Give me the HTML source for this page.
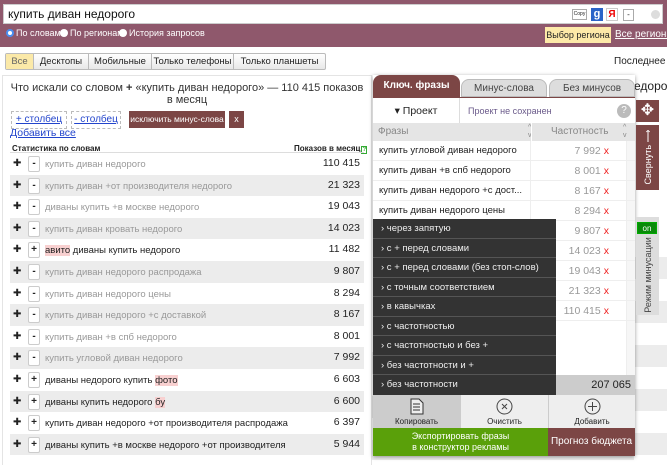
<!DOCTYPE html>
<html><head><meta charset="utf-8"><style>
*{box-sizing:border-box;margin:0;padding:0}
body{width:667px;height:463px;overflow:hidden;background:#fff;font-family:"Liberation Sans",Arial,sans-serif;font-size:11px;color:#222;position:relative;white-space:nowrap}
.a{position:absolute}
.hdr{left:0;top:0;width:667px;height:47px;background:#8f586c}
.inp{left:3px;top:4px;width:660px;height:20px;background:#fff;border:1px solid #ccc;font-size:12px;padding:2px 4px;color:#111}
.rad{top:28px;color:#fff;font-size:9px}
.rad i{display:inline-block;width:8px;height:8px;border-radius:50%;background:#fff;margin-right:2px;vertical-align:-1px}
.tabs{left:5px;top:53px;height:17px;display:flex;border:1px solid #bbb;border-radius:2px;background:linear-gradient(#fff,#e8e8e8)}
.tabs div{line-height:15px;border-right:1px solid #bbb;font-size:9.5px;text-align:center}
.row{left:10px;width:354px;height:21.6px}
.row.g{background:#ececec}
.pl{position:absolute;left:3px;top:5px;font-size:10px;line-height:12px}
.bx{position:absolute;left:18px;top:3px;width:12px;height:16px;border:1px solid #ccc;border-radius:2px;background:#fff;text-align:center;line-height:13px;font-weight:bold;font-size:10px}
.tx{position:absolute;left:35px;top:6px;font-size:9.5px;color:#999}
.tx.d{color:#222}
.nm{position:absolute;right:4px;top:4px;font-size:10.5px;color:#222}
.pop{left:373px;top:75px;width:262px;height:381px;box-shadow:0 1px 4px rgba(0,0,0,.4);background:#fff}
.ptab{top:0;height:22px;border-radius:8px 8px 0 0;text-align:center;line-height:22px;font-size:10px}
.fr{left:0;width:262px;height:20px;border-bottom:1px solid #eee}
.fr span{position:absolute;left:6px;top:4px;font-size:9.5px}
.fr b{position:absolute;right:26px;top:4px;font-weight:normal;color:#999;font-size:10.5px}
.fr b em{color:#e22;font-style:normal;margin-left:3px}
.menu{left:0;top:144px;width:183px;height:176px;background:#333}
.menu div{height:19.55px;border-bottom:1px solid #555;color:#eee;font-size:9.5px;line-height:19px;padding-left:8px}
</style></head><body>
<div class="a hdr"></div>
<div class="a inp">купить диван недорого</div>
<div class="a" style="left:572px;top:9px;width:15px;height:11px;border:1px solid #aaa;font-size:5px;line-height:9px;text-align:center;background:#fff">Copy</div>
<div class="a" style="left:591px;top:8px;width:12px;height:13px;background:#2a64c8;color:#fff;font-size:11px;text-align:center;font-weight:bold;line-height:13px">g</div>
<div class="a" style="left:606px;top:8px;width:12px;height:13px;border:1px solid #ccc;color:#e00;font-size:10px;text-align:center;line-height:11px;font-weight:bold;background:#fff">Я</div>
<div class="a" style="left:623px;top:9px;width:11px;height:12px;border:1px solid #aaa;font-size:8px;text-align:center;line-height:9px;background:#fff">-</div>
<div class="a" style="left:651px;top:10px;width:9px;height:9px;border-radius:50%;background:#ddd"></div>
<div class="a rad" style="left:6px"><i style="background:#fff;border:2px solid #4a8ff0"></i>По словам</div>
<div class="a rad" style="left:60px"><i></i>По регионам</div>
<div class="a rad" style="left:119px"><i></i>История запросов</div>
<div class="a" style="left:545px;top:27px;width:66px;height:16px;background:#fde9a8;font-size:9px;line-height:16px;text-align:center">Выбор региона</div>
<div class="a" style="left:615px;top:29px;color:#fff;font-size:10px;text-decoration:underline">Все регионы</div>
<div class="a tabs"><div style="width:28px;background:#fbe9a8;color:#666">Все</div><div style="width:55px">Десктопы</div><div style="width:63px">Мобильные</div><div style="width:82px">Только телефоны</div><div style="width:91px;border:0">Только планшеты</div></div>
<div class="a" style="left:614px;top:56px;font-size:10px">Последнее о</div>
<div class="a" style="left:2px;top:75px;width:370px;height:390px;border:1px solid #e4e4e4;border-bottom:0"></div>
<div class="a" style="left:10px;top:82px;width:354px;text-align:center;font-size:11px;line-height:12px;color:#333">Что искали со словом <b>+</b> «купить диван недорого» — 110 415 показов<br>в месяц</div>
<div class="a" style="left:11px;top:111px;width:56px;height:18px;border:1px dashed #bbb;text-align:center;line-height:16px;color:#24c;text-decoration:underline;font-size:10px">+ столбец</div>
<div class="a" style="left:71px;top:111px;width:50px;height:18px;border:1px dashed #bbb;text-align:center;line-height:16px;color:#24c;text-decoration:underline;font-size:10px">- столбец</div>
<div class="a" style="left:129px;top:111px;width:96px;height:17px;background:#7c4645;color:#fff;font-size:8.5px;text-align:center;line-height:17px">исключить минус-слова</div>
<div class="a" style="left:229px;top:111px;width:15px;height:17px;background:#7c4645;color:#fff;font-size:9px;text-align:center;line-height:17px">x</div>
<div class="a" style="left:10px;top:127px;color:#24c;text-decoration:underline;font-size:10.5px">Добавить все</div>
<div class="a" style="left:12px;top:144px;font-size:8px;font-weight:bold">Статистика по словам</div>
<div class="a" style="left:294px;top:144px;font-size:8px;font-weight:bold">Показов в месяц<span style="color:#3a3;border:1px solid #3a3;font-size:6px;margin-left:1px">?</span></div>
<div class="a" style="left:10px;top:152px;width:354px;height:1px;background:#ddd"></div>

<div class="a row" style="top:153px"><span class="pl">✚</span><span class="bx">-</span><span class="tx">купить диван недорого</span><span class="nm">110 415</span></div>
<div class="a row g" style="top:174.6px"><span class="pl">✚</span><span class="bx">-</span><span class="tx">купить диван +от производителя недорого</span><span class="nm">21 323</span></div>
<div class="a row" style="top:196.2px"><span class="pl">✚</span><span class="bx">-</span><span class="tx">диваны купить +в москве недорого</span><span class="nm">19 043</span></div>
<div class="a row g" style="top:217.8px"><span class="pl">✚</span><span class="bx">-</span><span class="tx">купить диван кровать недорого</span><span class="nm">14 023</span></div>
<div class="a row" style="top:239.4px"><span class="pl">✚</span><span class="bx">+</span><span class="tx d"><span style="background:#f8d0d0">авито</span> диваны купить недорого</span><span class="nm">11 482</span></div>
<div class="a row g" style="top:261px"><span class="pl">✚</span><span class="bx">-</span><span class="tx">купить диван недорого распродажа</span><span class="nm">9 807</span></div>
<div class="a row" style="top:282.6px"><span class="pl">✚</span><span class="bx">-</span><span class="tx">купить диван недорого цены</span><span class="nm">8 294</span></div>
<div class="a row g" style="top:304.2px"><span class="pl">✚</span><span class="bx">-</span><span class="tx">купить диван недорого +с доставкой</span><span class="nm">8 167</span></div>
<div class="a row" style="top:325.8px"><span class="pl">✚</span><span class="bx">-</span><span class="tx">купить диван +в спб недорого</span><span class="nm">8 001</span></div>
<div class="a row g" style="top:347.4px"><span class="pl">✚</span><span class="bx">-</span><span class="tx">купить угловой диван недорого</span><span class="nm">7 992</span></div>
<div class="a row" style="top:369px"><span class="pl">✚</span><span class="bx">+</span><span class="tx d">диваны недорого купить <span style="background:#f8d0d0">фото</span></span><span class="nm">6 603</span></div>
<div class="a row g" style="top:390.6px"><span class="pl">✚</span><span class="bx">+</span><span class="tx d">диваны купить недорого <span style="background:#f8d0d0">бу</span></span><span class="nm">6 600</span></div>
<div class="a row" style="top:412.2px"><span class="pl">✚</span><span class="bx">+</span><span class="tx d">купить диван недорого +от производителя распродажа</span><span class="nm">6 397</span></div>
<div class="a row g" style="top:433.8px"><span class="pl">✚</span><span class="bx">+</span><span class="tx d">диваны купить +в москве недорого +от производителя</span><span class="nm">5 944</span></div>
<div class="a" style="left:372px;top:330px;width:262px;height:130px;background:repeating-linear-gradient(#fff 0,#fff 22px,#ececec 22px,#ececec 44px)"></div>
<div class="a" style="left:634px;top:235px;width:33px;height:230px;background:repeating-linear-gradient(#fff 0,#fff 22px,#ececec 22px,#ececec 44px)"></div>
<div class="a" style="left:634px;top:79px;font-size:12px">едорог</div>

<div class="a pop">
<div class="a ptab" style="left:0;width:87px;background:#7c4645;color:#fff;font-weight:bold;border-radius:8px 8px 0 0">Ключ. фразы</div>
<div class="a ptab" style="left:88px;top:4px;height:18px;line-height:18px;width:86px;background:#ddd;border:1px solid #bbb;color:#444">Минус-слова</div>
<div class="a ptab" style="left:176px;top:4px;height:18px;line-height:18px;width:86px;background:#ddd;border:1px solid #bbb;color:#444">Без минусов</div>
<div class="a" style="left:0;top:22px;width:262px;height:1px;background:#7c4645"></div>
<div class="a" style="left:0;top:23px;width:87px;height:26px;border-right:1px solid #ddd;text-align:center;line-height:26px;font-size:10.5px">▾ Проект</div>
<div class="a" style="left:95px;top:31px;font-size:9px;color:#6a5a8a">Проект не сохранен</div>
<div class="a" style="left:244px;top:29px;width:14px;height:14px;border-radius:50%;background:#bbb;color:#fff;text-align:center;line-height:14px;font-size:10px">?</div>
<div class="a" style="left:0;top:48px;width:262px;height:18px;background:#e5e5e5;color:#888;font-size:10px;line-height:18px"><span style="position:absolute;left:5px">Фразы</span><span style="position:absolute;left:178px">Частотность</span><span style="position:absolute;left:155px;font-size:7px;line-height:8px;top:1px">^<br>v</span><span style="position:absolute;left:250px;font-size:7px;line-height:8px;top:1px">^<br>v</span><span style="position:absolute;left:158px;top:0;width:1px;height:18px;background:#fff"></span></div>
<div class="a" style="left:253px;top:66px;width:9px;height:310px;background:#f6f6f6;border-left:1px solid #eee"></div>
<div class="a" style="left:157px;top:66px;width:1px;height:234px;background:#eee"></div>
<div class="a fr" style="top:66px"><span>купить угловой диван недорого</span><b>7 992<em>x</em></b></div>
<div class="a fr" style="top:86px"><span>купить диван +в спб недорого</span><b>8 001<em>x</em></b></div>
<div class="a fr" style="top:106px"><span>купить диван недорого +с дост...</span><b>8 167<em>x</em></b></div>
<div class="a fr" style="top:126px"><span>купить диван недорого цены</span><b>8 294<em>x</em></b></div>
<div class="a fr" style="top:146px"><b>9 807<em>x</em></b></div>
<div class="a fr" style="top:166px"><b>14 023<em>x</em></b></div>
<div class="a fr" style="top:186px"><b>19 043<em>x</em></b></div>
<div class="a fr" style="top:206px"><b>21 323<em>x</em></b></div>
<div class="a fr" style="top:226px"><b>110 415<em>x</em></b></div>
<div class="a" style="left:183px;top:300px;width:79px;height:20px;background:#ccc;text-align:right;padding-right:4px;line-height:20px;font-size:11px">207 065</div>
<div class="a menu">
<div>› через запятую</div><div>› с + перед словами</div><div>› с + перед словами (без стоп-слов)</div><div>› с точным соответствием</div><div>› в кавычках</div><div>› с частотностью</div><div>› с частотностью и без +</div><div>› без частотности и +</div><div style="border:0">› без частотности</div>
</div>
<div class="a" style="left:0;top:320px;width:87px;height:33px;background:#ccc;text-align:center;font-size:8px"><svg width="14" height="17" style="margin-top:3px"><path d="M1 1h8l4 4v11H1z" fill="#eee" stroke="#333"/><path d="M3 6h7M3 9h7M3 12h7" stroke="#333"/></svg><div>Копировать</div></div>
<div class="a" style="left:87px;top:320px;width:88px;height:33px;background:#eee;text-align:center;font-size:8px;border-left:1px solid #ccc"><svg width="17" height="17" style="margin-top:3px"><circle cx="8.5" cy="8.5" r="7.5" fill="none" stroke="#444"/><path d="M6 6l5 5M11 6l-5 5" stroke="#444"/></svg><div>Очистить</div></div>
<div class="a" style="left:175px;top:320px;width:87px;height:33px;background:#eee;text-align:center;font-size:8px;border-left:1px solid #ccc"><svg width="17" height="17" style="margin-top:3px"><circle cx="8.5" cy="8.5" r="7.5" fill="none" stroke="#444"/><path d="M8.5 4v9M4 8.5h9" stroke="#444"/></svg><div>Добавить</div></div>
<div class="a" style="left:0;top:353px;width:175px;height:28px;background:#5aa00a;color:#fff;text-align:center;font-size:9px;line-height:11px;padding-top:3px">Экспортировать фразы<br>в конструктор рекламы</div>
<div class="a" style="left:175px;top:353px;width:87px;height:28px;background:#7c4645;color:#fff;text-align:center;font-size:10px;line-height:28px">Прогноз бюджета</div>
</div>

<div class="a" style="left:636px;top:100px;width:23px;height:22px;background:#7c4645;color:#fff;text-align:center;line-height:22px;font-size:16px">✥</div>
<div class="a" style="left:636px;top:125px;width:23px;height:65px;background:#7c4645"></div>
<div class="a" style="left:616px;top:150px;width:64px;height:14px;transform:rotate(-90deg);color:#fff;font-size:9px;text-align:center;line-height:14px">Свернуть ⟶</div>
<div class="a" style="left:636px;top:217px;width:23px;height:98px;background:#ddd"></div>
<div class="a" style="left:637px;top:222px;width:20px;height:12px;background:#0a8a0a;color:#fff;font-size:8px;text-align:center;line-height:12px;border:1px solid #0a0">on</div>
<div class="a" style="left:610px;top:268px;width:76px;height:14px;transform:rotate(-90deg);color:#444;font-size:9px;text-align:center;line-height:14px">Режим минусации</div>
</body></html>
